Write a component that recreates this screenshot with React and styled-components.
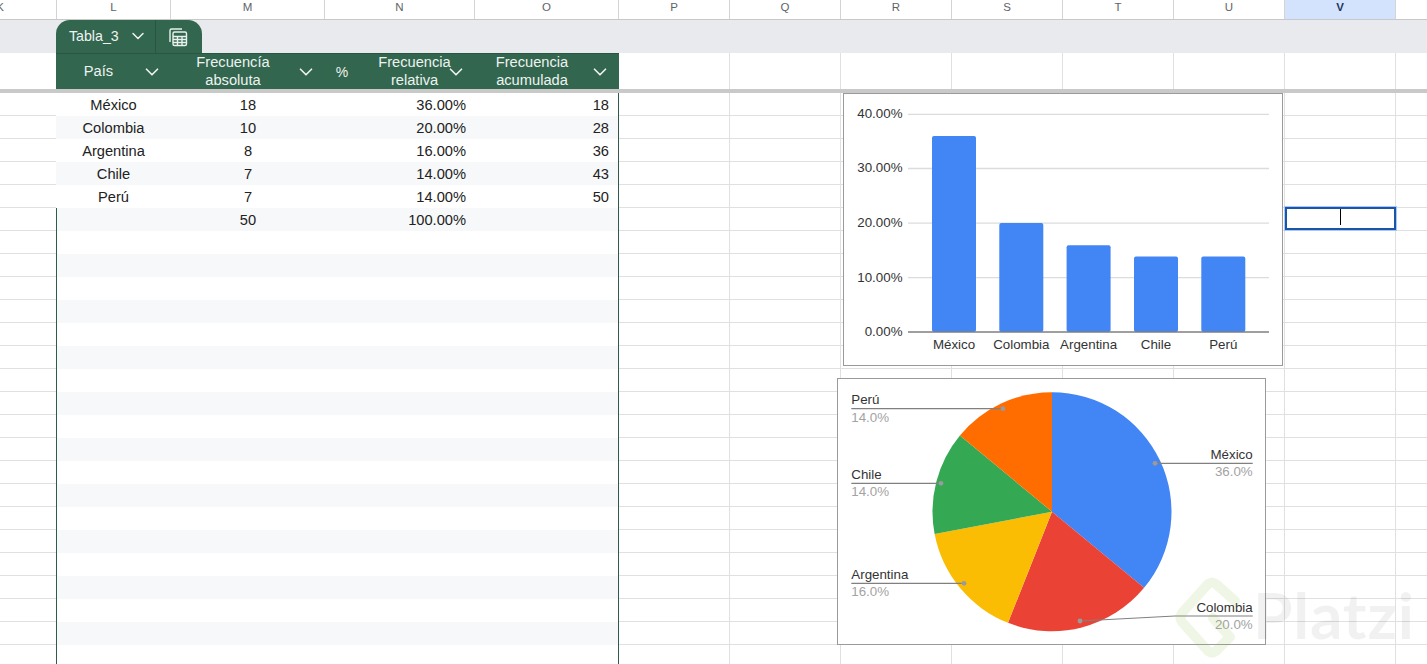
import React from "react";
import styled, { createGlobalStyle } from "styled-components";
import { ChevronDown } from "lucide-react";

// k is about twice as wide as visible, the sheet is shifted left so its letter is cut in half
const COLUMNS = "113px 114px 154px 150px 144px 111px 111px 111px 111px 111px 111px 111px 111px";
const LETTERS = ["K", "L", "M", "N", "O", "P", "Q", "R", "S", "T", "U", "V", ""];
const EMPTY_COLUMNS = ["P", "Q", "R", "S", "T", "U", "V", "W"];

const rows = [
  ["México", "18", "36.00%", "18"],
  ["Colombia", "10", "20.00%", "28"],
  ["Argentina", "8", "16.00%", "36"],
  ["Chile", "7", "14.00%", "43"],
  ["Perú", "7", "14.00%", "50"],
  ["", "50", "100.00%", ""],
];

const bars = [
  { label: "México", x: 932, top: 136 },
  { label: "Colombia", x: 999.3, top: 223 },
  { label: "Argentina", x: 1066.6, top: 245.2 },
  { label: "Chile", x: 1134, top: 256.5 },
  { label: "Perú", x: 1201.3, top: 256.5 },
];

const yTicks = [
  { label: "40.00%", y: 114.3 },
  { label: "30.00%", y: 168.5 },
  { label: "20.00%", y: 223.2 },
  { label: "10.00%", y: 277.6 },
  { label: "0.00%", y: 332 },
];

const slices = [
  { share: 36, color: "#4285f4" },
  { share: 20, color: "#ea4335" },
  { share: 16, color: "#fbbc04" },
  { share: 14, color: "#34a853" },
  { share: 14, color: "#ff6d01" },
];

const pieLabels = [
  { name: "México", pct: "36.0%", x: 1252.7, y: 463.3, anchor: "end", line: "M1252.7 463.3H1155", dot: [1155, 463.3] },
  { name: "Colombia", pct: "20.0%", x: 1252.7, y: 616, anchor: "end", line: "M1252.7 616H1175L1080 621", dot: [1080, 621] },
  { name: "Argentina", pct: "16.0%", x: 851.3, y: 583.3, anchor: "start", line: "M851.3 583.3H964", dot: [964, 583.3] },
  { name: "Chile", pct: "14.0%", x: 851.3, y: 483.3, anchor: "start", line: "M851.3 483.3H941", dot: [941, 483.3] },
  { name: "Perú", pct: "14.0%", x: 851.3, y: 408.7, anchor: "start", line: "M851.3 408.7H1003", dot: [1003, 408.7] },
];

const CX = 1052;
const CY = 511.7;
const R = 119.5;

function slicePaths() {
  let start = 0;
  return slices.map((s) => {
    const end = start + (s.share / 100) * Math.PI * 2;
    const large = end - start > Math.PI ? 1 : 0;
    const d = `M${CX} ${CY}L${CX + R * Math.sin(start)} ${CY - R * Math.cos(start)}A${R} ${R} 0 ${large} 1 ${
      CX + R * Math.sin(end)
    } ${CY - R * Math.cos(end)}Z`;
    start = end;
    return { d, color: s.color };
  });
}

function BarChart() {
  return (
    <ChartFrame $left={843} $top={93} $width={440} $height={273}>
      <svg viewBox="844 94 438 271">
        {yTicks.map((t, i) => (
          <g key={t.label}>
            {i < 4 && <line x1="908" x2="1269" y1={t.y} y2={t.y} stroke="#dcdcdc" strokeWidth="1.3" />}
            <AxisText x="902.5" y={t.y + 3.9} textAnchor="end">
              {t.label}
            </AxisText>
          </g>
        ))}
        {bars.map((b) => (
          <g key={b.label}>
            <rect x={b.x} y={b.top} width="44" height={332 - b.top} rx="2" fill="#4285f4" />
            <AxisText x={b.x + 22} y="349" textAnchor="middle">
              {b.label}
            </AxisText>
          </g>
        ))}
        <line x1="908" x2="1269" y1="332" y2="332" stroke="#7f7f7f" strokeWidth="1.6" />
      </svg>
    </ChartFrame>
  );
}

function PieChart() {
  return (
    <ChartFrame $left={837} $top={378} $width={429} $height={267}>
      <svg viewBox="838 379 427 265">
        {slicePaths().map((s) => (
          <path key={s.color} d={s.d} fill={s.color} />
        ))}
        {pieLabels.map((l) => (
          <g key={l.name}>
            <path d={l.line} fill="none" stroke="#808080" strokeWidth="1.2" />
            <circle cx={l.dot[0]} cy={l.dot[1]} r="2.4" fill="#9a9a9a" />
            <AxisText x={l.x} y={l.y - 4.3} textAnchor={l.anchor}>
              {l.name}
            </AxisText>
            <PercentText x={l.x} y={l.y + 13} textAnchor={l.anchor}>
              {l.pct}
            </PercentText>
          </g>
        ))}
      </svg>
    </ChartFrame>
  );
}

function CalcIcon() {
  return (
    <svg width="20" height="20" viewBox="0 0 20 20" fill="none" stroke="#e9f1ed" strokeWidth="1.4">
      <path d="M2 15V3.5A1.5 1.5 0 0 1 3.5 2H14" />
      <rect x="5" y="5" width="13.5" height="13.5" rx="1.5" />
      <path d="M5 9.5H18.5M5 12.5H18.5M5 15.5H18.5M9.5 9.5V18.5M14 9.5V18.5" />
    </svg>
  );
}

function Head({ label, percent }) {
  return (
    <HeadCell>
      {percent && <PercentMark>%</PercentMark>}
      <HeadLabel $tight={percent}>{label}</HeadLabel>
      <ChevronDown size={22} strokeWidth={1.8} />
    </HeadCell>
  );
}

export default function App() {
  return (
    <Sheet>
      <GlobalStyle />
      <ColumnBar>
        {LETTERS.map((l, i) => (
          <ColumnLetter key={i} $active={l === "V"}>
            {l}
          </ColumnLetter>
        ))}
      </ColumnBar>

      <TabBand>
        <TableTab>
          <TabName>
            Tabla_3
            <ChevronDown size={20} strokeWidth={1.8} />
          </TabName>
          <TabAction>
            <CalcIcon />
          </TabAction>
        </TableTab>
      </TabBand>

      <HeaderRow>
        <GridCell />
        <TableHead>
          <Head label="País" />
          <Head
            label={
              <>
                Frecuencía
                <br />
                absoluta
              </>
            }
          />
          <Head
            percent
            label={
              <>
                Frecuencia
                <br />
                relativa
              </>
            }
          />
          <Head
            label={
              <>
                Frecuencia
                <br />
                acumulada
              </>
            }
          />
        </TableHead>
        {EMPTY_COLUMNS.map((c) => (
          <GridCell key={c} />
        ))}
      </HeaderRow>

      <FreezeBar />

      {Array.from({ length: 25 }, (_, i) => {
        const row = rows[i] || ["", "", "", ""];
        const band = i % 2 === 1 && i < 24;
        return (
          <Row key={i}>
            <GridCell $line />
            <FirstCell $band={band} $edge={i >= 5}>
              {row[0]}
            </FirstCell>
            <DataCell $band={band}>{row[1]}</DataCell>
            <DataCell $band={band} $align="right">
              {row[2]}
            </DataCell>
            <DataCell $band={band} $align="right" $last>
              {row[3]}
            </DataCell>
            {EMPTY_COLUMNS.map((c) => (
              <GridCell key={c} $line>
                {c === "V" && i === 5 && (
                  <ActiveCell>
                    <Caret />
                  </ActiveCell>
                )}
              </GridCell>
            ))}
          </Row>
        );
      })}

      <BarChart />
      <PieChart />

      <Watermark>
        <svg
          width="76"
          height="82"
          viewBox="0 0 76 82"
          fill="none"
          stroke="rgba(150, 190, 80, 0.14)"
          strokeWidth="10"
          strokeLinecap="round"
          strokeLinejoin="round"
        >
          <path d="M60 24L41 7Q37 4 33 7L7 36Q4 41 7 45L33 74Q37 77 41 74L55 60L38 41" />
        </svg>
        <WatermarkText>Platzi</WatermarkText>
      </Watermark>
    </Sheet>
  );
}

const GlobalStyle = createGlobalStyle`
  html, body {
    margin: 0;
    background: #fff;
    overflow: hidden;
  }
`;

const Sheet = styled.div`
  position: relative;
  width: 1427px;
  height: 664px;
  overflow: hidden;
  background: #fff;
  font-family: "Liberation Sans", Arial, sans-serif;
  font-size: 14.67px;
  color: #222;
`;

const ColumnBar = styled.div`
  display: grid;
  grid-template-columns: ${COLUMNS};
  height: 20px;
  margin-left: -56px;
  width: 1540px;
  border-bottom: 1px solid #c8c8c8;
  box-sizing: border-box;
`;

const ColumnLetter = styled.div`
  display: flex;
  align-items: center;
  justify-content: center;
  padding-bottom: 5px;
  box-sizing: border-box;
  border-right: 1px solid #d4d4d4;
  font-size: 11.5px;
  font-weight: ${(p) => (p.$active ? 700 : 400)};
  color: ${(p) => (p.$active ? "#1f3760" : "#5f6368")};
  background: ${(p) => (p.$active ? "#d3e3fd" : "transparent")};
`;

const TabBand = styled.div`
  height: 33px;
  background: #e8eaed;
  padding-left: 56px;
  display: flex;
  align-items: flex-end;
`;

const TableTab = styled.div`
  display: flex;
  width: 146px;
  height: 33px;
  background: #33664f;
  border-radius: 14px 14px 0 0;
  color: #eef3f0;
  font-size: 14.2px;
`;

const TabName = styled.div`
  display: flex;
  align-items: center;
  gap: 9px;
  width: 100px;
  padding: 0 0 2px 13px;
  box-sizing: border-box;
  border-right: 1px solid #2a5542;
`;

const TabAction = styled.div`
  display: flex;
  flex: 1;
  align-items: center;
  justify-content: center;
  padding-right: 2px;
`;

const HeaderRow = styled.div`
  display: grid;
  grid-template-columns: ${COLUMNS};
  grid-template-rows: 36px;
  width: 1540px;
  height: 36px;
  margin-left: -56px;
`;

const TableHead = styled.div`
  position: relative;
  grid-column: span 4;
  display: grid;
  grid-template-columns: 115px 154px 150px 144px;
  grid-template-rows: 35px;
  margin-left: -1px;
  background: #33664f;
  border-top: 1px solid #2a5542;
  box-sizing: border-box;
  color: #eef3f0;
`;

const HeadCell = styled.div`
  display: flex;
  align-items: center;
  padding-right: 8px;
  min-width: 0;
  min-height: 0;
`;

const HeadLabel = styled.div`
  flex: 1;
  text-align: center;
  line-height: 18px;
  white-space: nowrap;
  margin: ${(p) => (p.$tight ? "0 -6px 2px 19px" : "0 0 2px")};
`;

const PercentMark = styled.span`
  width: 34px;
  text-align: center;
  font-size: 14px;
`;

const FreezeBar = styled.div`
  height: 4px;
  background: #c9c9c9;
`;

const Row = styled.div`
  display: grid;
  grid-template-columns: ${COLUMNS};
  width: 1540px;
  height: 23px;
  margin-left: -56px;
`;

const GridCell = styled.div`
  position: relative;
  box-sizing: border-box;
  border-right: 1px solid #e0e0e0;
  border-bottom: ${(p) => (p.$line ? "1px solid #e0e0e0" : "none")};
`;

const DataCell = styled.div`
  box-sizing: border-box;
  height: 23px;
  line-height: 24px;
  white-space: nowrap;
  text-align: ${(p) => p.$align || "center"};
  padding-right: ${(p) => (p.$align ? "9px" : "0")};
  background: ${(p) => (p.$band ? "#f6f8f9" : "#fff")};
  border-right: ${(p) => (p.$last ? "1px solid #2f5c4a" : "none")};
`;

// covers the grey line of the K column, which turns dark below the data
const FirstCell = styled(DataCell)`
  position: relative;
  margin-left: -1px;
  border-left: ${(p) => (p.$edge ? "1px solid #2f5c4a" : "none")};
`;

const ActiveCell = styled.div`
  position: absolute;
  inset: -1px -1px 0 0;
  z-index: 2;
  border: 2px solid #1a55a8;
  outline: 1px solid #a8c7fa;
  display: flex;
  align-items: flex-start;
  justify-content: center;
  box-sizing: border-box;
`;

const Caret = styled.div`
  width: 1px;
  height: 16px;
  background: #000;
`;

const ChartFrame = styled.div`
  position: absolute;
  left: ${(p) => p.$left}px;
  top: ${(p) => p.$top}px;
  width: ${(p) => p.$width}px;
  height: ${(p) => p.$height}px;
  box-sizing: border-box;
  border: 1px solid #9a9a9a;
  background: #fff;

  svg {
    display: block;
    width: 100%;
    height: 100%;
  }
`;

const AxisText = styled.text`
  font-family: "Liberation Sans", Arial, sans-serif;
  font-size: 13.33px;
  fill: #333;
`;

const PercentText = styled(AxisText)`
  fill: #a3a3a3;
`;

const Watermark = styled.div`
  position: absolute;
  left: 1175px;
  top: 577px;
  display: flex;
  align-items: flex-start;
  pointer-events: none;
`;

const WatermarkText = styled.div`
  margin: -1px 0 0 2px;
  font-family: Lato, "Open Sans", sans-serif;
  font-size: 64px;
  font-weight: 700;
  letter-spacing: 0.8px;
  line-height: 78px;
  color: rgba(0, 0, 0, 0.055);
`;
